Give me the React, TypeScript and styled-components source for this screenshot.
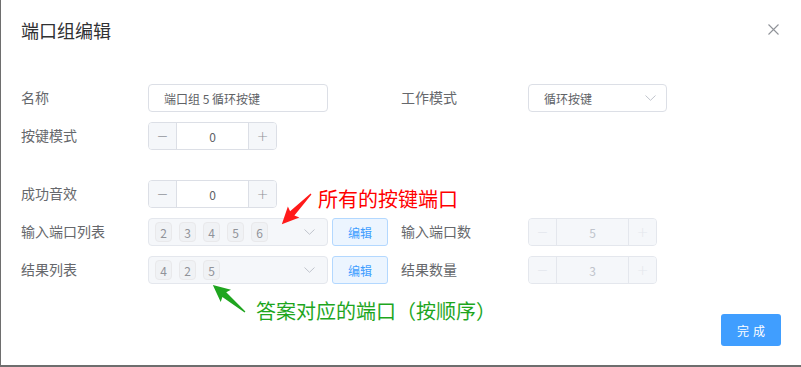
import React from 'react';
import styled, { createGlobalStyle } from 'styled-components';

const GlobalStyle = createGlobalStyle`
  html, body {
    margin: 0;
    padding: 0;
    background: #6e6e6e;
  }
  body {
    font-family: "Noto Sans CJK SC", "Noto Sans", "Liberation Sans", sans-serif;
  }
`;

const inputPorts = [2, 3, 4, 5, 6];
const resultPorts = [4, 2, 5];

const Chevron: React.FC = () => (
  <svg width="11" height="6" viewBox="0 0 11 6">
    <path d="M0.5 0.5 L5.5 5.3 L10.5 0.5" fill="none" stroke="#c0c4cc" strokeWidth="1" />
  </svg>
);

const NumberInput: React.FC<{ value: number; disabled?: boolean }> = ({ value, disabled }) => (
  <Stepper $disabled={disabled}>
    <StepButton $disabled={disabled} $side="left">−</StepButton>
    <StepValue $disabled={disabled}>{value}</StepValue>
    <StepButton $disabled={disabled} $side="right">+</StepButton>
  </Stepper>
);

const TagSelect: React.FC<{ values: number[] }> = ({ values }) => (
  <SelectWrap>
    <TagBox $disabled>
      <Tags>
        {values.map((v, i) => (
          <Tag key={i}>{v}</Tag>
        ))}
      </Tags>
      <Chevron />
    </TagBox>
    <EditButton>编辑</EditButton>
  </SelectWrap>
);

const App: React.FC = () => {
  return (
    <>
      <GlobalStyle />
      <Dialog>
        <Header>
          <Title>端口组编辑</Title>
          <Close>
            <svg width="11" height="11" viewBox="0 0 11 11">
              <path d="M0.5 0.5 L10.5 10.5 M10.5 0.5 L0.5 10.5" stroke="#909399" strokeWidth="1.1" />
            </svg>
          </Close>
        </Header>

        <Body>
          <Row $top={0}>
            <Item>
              <Label>名称</Label>
              <TextInput>端口组 5 循环按键</TextInput>
            </Item>
            <Item>
              <Label>工作模式</Label>
              <Select>
                <span>循环按键</span>
                <Chevron />
              </Select>
            </Item>
          </Row>
          <Row $top={10}>
            <Item>
              <Label>按键模式</Label>
              <NumberInput value={0} />
            </Item>
          </Row>
          <Row $top={30}>
            <Item>
              <Label>成功音效</Label>
              <NumberInput value={0} />
            </Item>
          </Row>
          <Row $top={10}>
            <Item>
              <Label>输入端口列表</Label>
              <TagSelect values={inputPorts} />
            </Item>
            <Item>
              <Label>输入端口数</Label>
              <NumberInput value={5} disabled />
            </Item>
          </Row>
          <Row $top={10}>
            <Item>
              <Label>结果列表</Label>
              <TagSelect values={resultPorts} />
            </Item>
            <Item>
              <Label>结果数量</Label>
              <NumberInput value={3} disabled />
            </Item>
          </Row>
        </Body>

        <Footer>
          <PrimaryButton>完成</PrimaryButton>
        </Footer>

        <Annotations>
          <svg width="800" height="365" viewBox="0 0 800 365">
            <polygon
              transform="translate(310,194) rotate(134)"
              points="0,-0.6 27,-3 25,-8 42,0 25,8 27,3 0,0.6"
              fill="#ff1a1a"
            />
            <polygon
              transform="translate(244,312) rotate(220)"
              points="0,-0.6 27,-3 25,-8 42,0 25,8 27,3 0,0.6"
              fill="#1fa51f"
            />
          </svg>
          <Note $color="#ff0000" $x={317} $y={186}>所有的按键端口</Note>
          <Note $color="#1ea61e" $x={255} $y={298}>答案对应的端口（按顺序）</Note>
        </Annotations>
      </Dialog>
    </>
  );
};

const Dialog = styled.div`
  position: relative;
  margin-left: 1px;
  width: 800px;
  height: 365px;
  background: #fff;
  display: flex;
  flex-direction: column;
  box-sizing: border-box;
`;

const Header = styled.div`
  display: flex;
  justify-content: space-between;
  align-items: flex-start;
  padding: 19px 22px 0 20px;
  height: 42px;
  box-sizing: border-box;
`;

const Title = styled.div`
  font-size: 18px;
  line-height: 22px;
  color: #303133;
`;

const Close = styled.div`
  padding-top: 5px;
  line-height: 0;
`;

const Body = styled.div`
  flex: 1;
  padding: 42px 0 0 20px;
`;

const Row = styled.div<{ $top: number }>`
  display: grid;
  grid-template-columns: 380px 1fr;
  margin-top: ${(p) => p.$top}px;
  height: 28px;
`;

const Item = styled.div`
  display: flex;
  align-items: center;
`;

const Label = styled.div`
  width: 127px;
  font-size: 14px;
  color: #66686c;
  line-height: 28px;
  margin-top: -2px;
`;

const fieldBase = `
  height: 28px;
  box-sizing: border-box;
  border-radius: 4px;
  font-size: 12px;
  display: flex;
  align-items: center;
`;

const TextInput = styled.div`
  ${fieldBase}
  width: 180px;
  border: 1px solid #dcdfe6;
  padding: 0 15px;
  color: #606266;
`;

const Select = styled.div`
  ${fieldBase}
  width: 139px;
  border: 1px solid #dcdfe6;
  padding: 0 10px 0 15px;
  color: #606266;
  justify-content: space-between;
`;

const SelectWrap = styled.div`
  display: flex;
  gap: 4px;
`;

const TagBox = styled.div<{ $disabled?: boolean }>`
  ${fieldBase}
  width: 180px;
  border: 1px solid ${(p) => (p.$disabled ? '#e4e7ed' : '#dcdfe6')};
  background: ${(p) => (p.$disabled ? '#f5f7fa' : '#fff')};
  padding: 0 12px 0 6px;
  justify-content: space-between;
`;

const Tags = styled.div`
  display: flex;
  gap: 7px;
`;

const Tag = styled.span`
  width: 17px;
  height: 20px;
  box-sizing: border-box;
  border: 1px solid #e9e9eb;
  background: #f0f2f5;
  border-radius: 4px;
  color: #909399;
  font-size: 12px;
  display: flex;
  align-items: center;
  justify-content: center;
`;

const EditButton = styled.button`
  width: 56px;
  height: 28px;
  border: 1px solid #b3d8ff;
  background: #ecf5ff;
  color: #409eff;
  border-radius: 3px;
  font-size: 12px;
  font-family: inherit;
  padding: 0;
`;

const Stepper = styled.div<{ $disabled?: boolean }>`
  width: 129px;
  height: 28px;
  box-sizing: border-box;
  border: 1px solid ${(p) => (p.$disabled ? '#e4e7ed' : '#dcdfe6')};
  border-radius: 4px;
  background: ${(p) => (p.$disabled ? '#f5f7fa' : '#fff')};
  display: grid;
  grid-template-columns: 28px 1fr 28px;
  overflow: hidden;
`;

const StepButton = styled.div<{ $disabled?: boolean; $side: 'left' | 'right' }>`
  background: #f5f7fa;
  color: ${(p) => (p.$disabled ? '#e4e7ed' : '#909399')};
  ${(p) => (p.$side === 'left' ? 'border-right' : 'border-left')}: 1px solid ${(p) =>
    p.$disabled ? '#e4e7ed' : '#dcdfe6'};
  display: flex;
  align-items: center;
  justify-content: center;
  font-size: 14px;
  font-family: "DejaVu Sans", sans-serif;
  font-weight: 300;
`;

const StepValue = styled.div<{ $disabled?: boolean }>`
  display: flex;
  align-items: center;
  justify-content: center;
  font-size: 12px;
  color: ${(p) => (p.$disabled ? '#c0c4cc' : '#606266')};
`;

const Footer = styled.div`
  display: flex;
  justify-content: flex-end;
  padding: 0 20px 19px 0;
`;

const PrimaryButton = styled.button`
  width: 60px;
  height: 32px;
  border: none;
  border-radius: 3px;
  background: #409eff;
  color: #fff;
  font-size: 12px;
  letter-spacing: 4px;
  text-indent: 4px;
  font-family: inherit;
  padding: 0;
`;

const Annotations = styled.div`
  position: absolute;
  inset: 0;
  pointer-events: none;
  svg {
    position: absolute;
    left: 0;
    top: 0;
  }
`;

const Note = styled.div<{ $color: string; $x: number; $y: number }>`
  position: absolute;
  left: ${(p) => p.$x}px;
  top: ${(p) => p.$y}px;
  color: ${(p) => p.$color};
  font-size: 20px;
  line-height: 26px;
  white-space: nowrap;
`;

export default App;
